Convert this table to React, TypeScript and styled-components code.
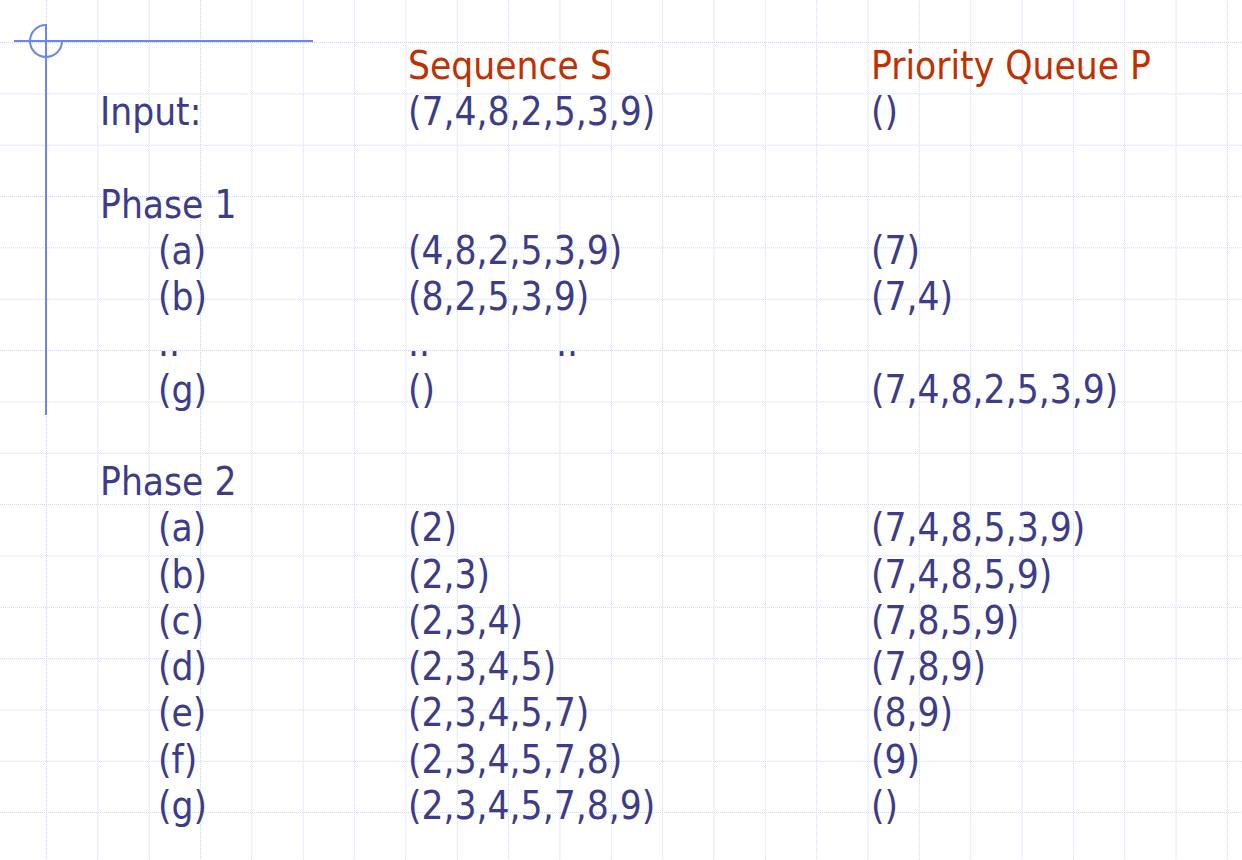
import styled, { createGlobalStyle } from 'styled-components'

const GlobalStyle = createGlobalStyle`
  html, body {
    margin: 0;
    padding: 0;
    background: #fff;
  }
`

// slide backdrop: light dotted graph-paper grid
const Slide = styled.div`
  position: relative;
  width: 1242px;
  height: 860px;
  overflow: hidden;
  background-color: #fff;
  background-image:
    conic-gradient(#fff 25%, transparent 0 50%, #fff 0 75%, transparent 0),
    linear-gradient(to right, #c9d3f6 1px, transparent 1px),
    linear-gradient(to bottom, #c9d3f6 1px, transparent 1px);
  background-size: 2px 2px, 51.35px 51.35px, 51.35px 51.35px;
  background-position: 0 0, 46px 42px, 46px 42px;
  font-family: 'DejaVu Sans Condensed', 'DejaVu Sans', sans-serif;
  font-size: 38.5px;
`

const Ornament = styled.svg`
  position: absolute;
  left: 0;
  top: 0;
  pointer-events: none;
`

const Table = styled.div`
  display: grid;
  grid-template-columns: 308px 463px 1fr;
  grid-auto-rows: 46.25px;
  padding: 43px 0 0 100px;
`

const Cell = styled.div<{ $indent?: boolean; $head?: boolean }>`
  display: flex;
  align-items: center;
  gap: 126px;
  padding-left: ${(p) => (p.$indent ? '58px' : '0')};
  color: ${(p) => (p.$head ? '#c03000' : '#3c3c8a')};
  line-height: 1;
  white-space: nowrap;
`

type Row = { label?: string; sub?: boolean; s?: string[]; p?: string; head?: boolean }

const rows: Row[] = [
  { s: ['Sequence S'], p: 'Priority Queue P', head: true },
  { label: 'Input:', s: ['(7,4,8,2,5,3,9)'], p: '()' },
  {},
  { label: 'Phase 1' },
  { label: '(a)', sub: true, s: ['(4,8,2,5,3,9)'], p: '(7)' },
  { label: '(b)', sub: true, s: ['(8,2,5,3,9)'], p: '(7,4)' },
  { label: '..', sub: true, s: ['..', '..'] },
  { label: '(g)', sub: true, s: ['()'], p: '(7,4,8,2,5,3,9)' },
  {},
  { label: 'Phase 2' },
  { label: '(a)', sub: true, s: ['(2)'], p: '(7,4,8,5,3,9)' },
  { label: '(b)', sub: true, s: ['(2,3)'], p: '(7,4,8,5,9)' },
  { label: '(c)', sub: true, s: ['(2,3,4)'], p: '(7,8,5,9)' },
  { label: '(d)', sub: true, s: ['(2,3,4,5)'], p: '(7,8,9)' },
  { label: '(e)', sub: true, s: ['(2,3,4,5,7)'], p: '(8,9)' },
  { label: '(f)', sub: true, s: ['(2,3,4,5,7,8)'], p: '(9)' },
  { label: '(g)', sub: true, s: ['(2,3,4,5,7,8,9)'], p: '()' },
]

const App = () => (
  <>
    <GlobalStyle />
    <Slide>
      <Table>
        {rows.map((r, i) => [
          <Cell key={`l${i}`} $indent={r.sub}>{r.label}</Cell>,
          <Cell key={`s${i}`} $head={r.head}>
            {(r.s || []).map((t, j) => (
              <span key={j}>{t}</span>
            ))}
          </Cell>,
          <Cell key={`p${i}`} $head={r.head}>{r.p}</Cell>,
        ])}
      </Table>
      <Ornament width="320" height="420" viewBox="0 0 320 420">
        <path d="M46 25 A16 16 0 1 0 62 41" fill="none" stroke="#6a86f0" strokeWidth="2" />
        <line x1="14" y1="41" x2="313" y2="41" stroke="#6a86f0" strokeWidth="2" />
        <line x1="46" y1="24" x2="46" y2="415" stroke="#6a86f0" strokeWidth="2" />
      </Ornament>
    </Slide>
  </>
)

export default App
